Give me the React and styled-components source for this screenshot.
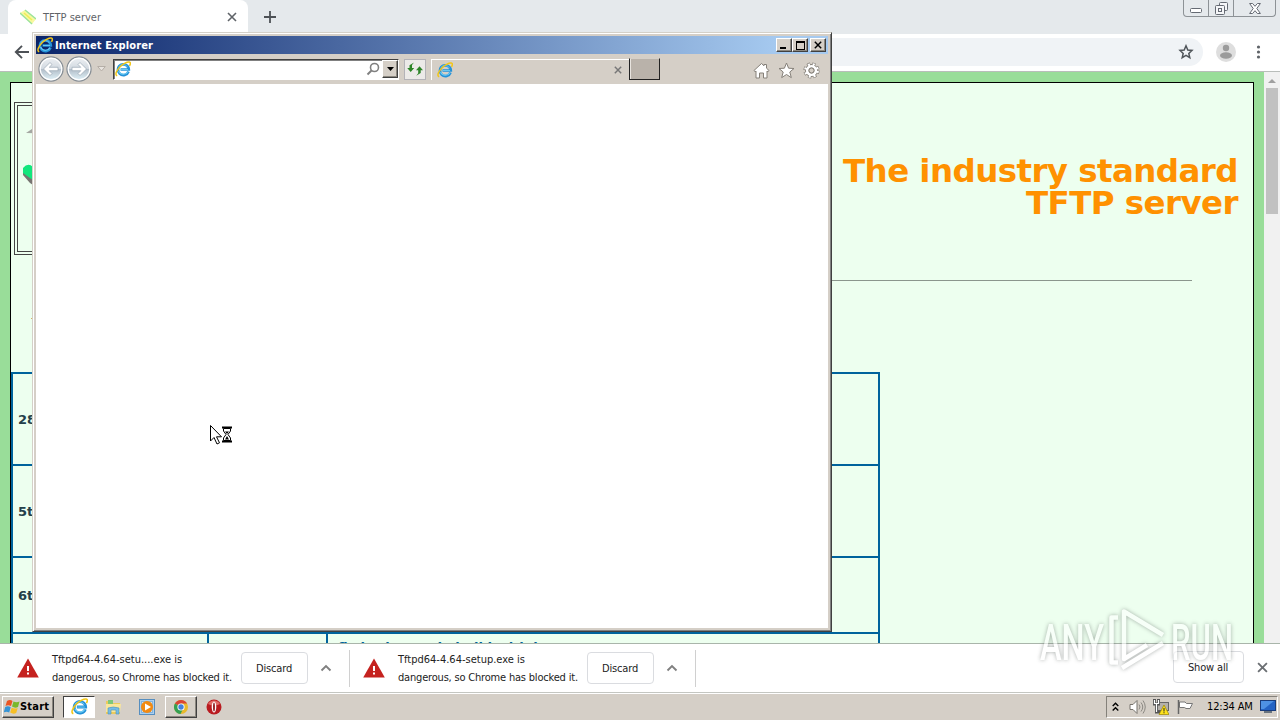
import React from "react";
import styled, {createGlobalStyle} from "styled-components";

const GlobalStyle = createGlobalStyle`
  * {
    box-sizing: border-box;
  }

  body {
    margin: 0;
    overflow: hidden;
    font-family: "DejaVu Sans Condensed", "DejaVu Sans", sans-serif;
    font-size: 11px;
    color: #222;
  }

  svg {
    display: block;
    flex: none;
  }
`;

const Desktop = styled.div`
  position: relative;
  display: flex;
  flex-direction: column;
  width: 1280px;
  height: 720px;
  overflow: hidden;
  background: #fff;
`;

const Label = styled.span`
  font-size: ${p => p.$size || 11}px;
  letter-spacing: ${p => p.$spacing || 0}px;
  font-weight: ${p => (p.$bold ? "bold" : "normal")};
  color: ${p => p.$color || "#222"};
  white-space: nowrap;
`;

/* browser */

const TabStrip = styled.div`
  display: flex;
  align-items: flex-start;
  height: 34px;
  padding-left: 8px;
  background: #e5e9ec;
`;

const Tab = styled.div`
  display: flex;
  align-items: center;
  width: 240px;
  height: 34px;
  padding: 0 11px 0 12px;
  background: #fff;
  border-radius: 8px 8px 0 0;
`;

const TabTitle = styled(Label)`
  flex: 1;
  margin-left: 7px;
`;

const NewTab = styled.div`
  margin: 10px 0 0 15px;
`;

const Caption = styled.div`
  display: flex;
  width: 93px;
  height: 17px;
  margin: 0 4px 0 auto;
  border: 1px solid #8d9296;
  border-top: 0;
  border-radius: 0 0 4px 4px;
`;

const CaptionCell = styled.div`
  display: flex;
  align-items: center;
  justify-content: center;
  width: ${p => p.$width}px;
  padding-top: ${p => p.$drop || 0}px;
  border-right: ${p => (p.$last ? "0" : "1px solid #8d9296")};
`;

const Toolbar = styled.div`
  display: flex;
  align-items: center;
  height: 38px;
  padding: 0 14px 1px 14px;
  border-bottom: 1px solid #b9bdba;
  background: #fff;
`;

const Omnibox = styled.div`
  display: flex;
  flex: 1;
  align-items: center;
  justify-content: flex-end;
  height: 28px;
  margin: 0 13px 0 90px;
  padding-right: 9px;
  background: #f0f3f6;
  border-radius: 14px;
`;

const MenuDots = styled.div`
  margin-left: 14px;
`;

const Viewport = styled.div`
  display: flex;
  height: 571px;
  overflow: hidden;
  background: #99dd99;
`;

const Page = styled.div`
  flex: 1;
  height: 700px;
  margin: 10px 10px 0;
  border: 1px solid #000;
  background: #edffef;
  font-family: Verdana, "DejaVu Sans", sans-serif;
`;

const Masthead = styled.div`
  display: flex;
  justify-content: space-between;
  height: 197px;
  padding: 19px 15px 0 3px;
`;

const Banner = styled.div`
  width: 260px;
  height: 153px;
  padding-top: 18px;
  border: 4px double #444;
`;

const Slogan = styled.h1`
  margin: 53px 0 0;
  font-size: 32.5px;
  line-height: 32px;
  letter-spacing: -0.58px;
  text-align: right;
  color: #ff9100;
`;

const Rule = styled.div`
  width: 1120px;
  height: 1px;
  margin-left: 61px;
  background: #8b968d;
`;

const Intro = styled.div`
  height: 91px;
  padding: 29px 0 0 20px;
  font-size: 13px;
  color: #333;
`;

const News = styled.div`
  width: 869px;
  border: 2px solid #00639c;
  border-bottom: 0;
`;

const NewsRow = styled.div`
  display: flex;
  align-items: center;
  height: ${p => p.$height}px;
  border-bottom: 2px solid #00639c;
`;

const NewsCell = styled.div`
  width: ${p => p.$width}px;
  height: ${p => (p.$line ? "100%" : "auto")};
  padding: ${p => p.$pad || "0 0 0 5px"};
  border-right: ${p => (p.$line ? "2px solid #00639c" : "0")};
  font-size: 13px;
  line-height: 15px;
  font-weight: bold;
  white-space: nowrap;
  color: ${p => p.$color || "#24404a"};
`;

const Scrollbar = styled.div`
  display: flex;
  flex-direction: column;
  align-items: center;
  width: 16px;
  background: #f1f1f1;
`;

const ScrollArrow = styled.div`
  width: 0;
  height: 0;
  margin: 7px 0 5px;
  border: 4px solid transparent;
  border-top: 0;
  border-bottom-color: #a0a0a0;
`;

const ScrollThumb = styled.div`
  width: 12px;
  height: 126px;
  background: #c1c1c1;
`;

const Shelf = styled.div`
  display: flex;
  align-items: center;
  height: 50px;
  padding-right: 12px;
  border-top: 1px solid #a9b5aa;
  border-bottom: 1px solid #c4c6c1;
  background: #fff;
`;

const Download = styled.div`
  display: flex;
  align-items: center;
  width: ${p => p.$width}px;
  height: 37px;
  padding-left: ${p => p.$pad}px;
  border-right: 1px solid #d0d0d0;
`;

const DownloadText = styled.div`
  display: flex;
  flex-direction: column;
  width: 189px;
  margin: 2px 0 0 13px;
  line-height: 18px;
`;

const ShelfButton = styled.div`
  display: flex;
  align-items: center;
  justify-content: center;
  width: ${p => p.$width}px;
  height: 32px;
  padding-right: 1px;
  border: 1px solid #dadce0;
  border-radius: 4px;
`;

const Chevron = styled.div`
  margin-left: 12px;
`;

const ShelfEnd = styled.div`
  display: flex;
  align-items: center;
  gap: 13px;
  height: 32px;
  margin: -2px 0 0 auto;
`;

/* taskbar */

const Taskbar = styled.div`
  display: flex;
  align-items: center;
  height: 27px;
  padding: 0 2px 1px;
  border-top: 1px solid #fff;
  background: #d5cfc7;
`;

const raised = `
  border: 1px solid;
  border-color: #fff #404040 #404040 #fff;
  box-shadow: inset -1px -1px 0 #8b877f;
`;

const StartButton = styled.div`
  ${raised}
  display: flex;
  align-items: center;
  width: 52px;
  height: 22px;
  padding-left: 1px;
`;

const TaskItem = styled.div`
  display: flex;
  align-items: center;
  justify-content: center;
  width: 32px;
  height: 22px;
  margin-left: ${p => p.$gap || 0}px;
  ${p => p.$raised && raised}
  ${p => p.$pressed && `
    background: #fff;
    border: 1px solid;
    border-color: #404040 #fff #fff #404040;
  `}
`;

const Tray = styled.div`
  display: flex;
  align-items: center;
  width: 172px;
  height: 22px;
  margin-left: auto;
  padding: 0 1px 0 5px;
  border: 1px solid;
  border-color: #84817a #fff #fff #84817a;
`;

const TrayGap = styled.div`
  width: ${p => p.$width}px;
`;

const Clock = styled(Label)`
  width: 53px;
`;

/* Internet Explorer window */

const Window = styled.div`
  position: absolute;
  left: 32px;
  top: 32px;
  width: 800px;
  height: 600px;
  padding: 2px;
  border: 1px solid;
  border-color: #d4d0c8 #404040 #404040 #d4d0c8;
  box-shadow: inset 1px 1px 0 #fff, inset -1px -1px 0 #808080;
  background: #d5cfc7;
`;

const WindowBody = styled.div`
  display: flex;
  flex-direction: column;
  height: 100%;
  padding: 1px;
`;

const TitleBar = styled.div`
  display: flex;
  align-items: center;
  height: 18px;
  padding: 0 2px 0 1px;
  background: linear-gradient(to right, #0a246a, #a6caf0 94%);
`;

const TitleText = styled(Label)`
  flex: 1;
  margin-left: 2px;
`;

const TitleButton = styled.div`
  ${raised}
  display: flex;
  align-items: center;
  justify-content: center;
  width: 16px;
  height: 14px;
  margin-left: ${p => p.$gap || 0}px;
  background: #d5cfc7;
`;

const NavBar = styled.div`
  display: flex;
  align-items: center;
  height: 30px;
  padding: 0 8px 0 2px;
`;

const History = styled.div`
  display: flex;
  gap: 2px;
  margin-right: 5px;
`;

const Address = styled.div`
  display: flex;
  align-items: center;
  width: 286px;
  height: 21px;
  margin-left: 7px;
  padding-left: 1px;
  border: 1px solid;
  border-color: #404040 #fff #fff #404040;
  box-shadow: inset 1px 1px 0 #808080;
  background: #fff;
`;

const Spacer = styled.div`
  flex: 1;
`;

const DropButton = styled.div`
  ${raised}
  display: flex;
  align-items: center;
  justify-content: center;
  width: 16px;
  height: 18px;
  margin-left: 2px;
  background: #d5cfc7;
`;

const Refresh = styled.div`
  display: flex;
  align-items: center;
  justify-content: center;
  width: 22px;
  height: 21px;
  margin-left: 5px;
  border: 1px solid #b4b3b8;
  background: #eceae8;
`;

const IeTab = styled.div`
  display: flex;
  align-items: center;
  justify-content: space-between;
  width: 198px;
  height: 21px;
  margin-left: 5px;
  padding: 0 7px 0 5px;
  border-top: 1px solid #fff;
  border-left: 1px solid #fff;
`;

const IeNewTab = styled.div`
  width: 31px;
  height: 22px;
  border: 1px solid #222;
  border-top-color: #d5cfc7;
  box-shadow: inset 1px 0 0 #e8e4df;
  background: #b9b2aa;
`;

const Commands = styled.div`
  display: flex;
  gap: 8px;
  margin: 3px 0 0 auto;
`;

const Document = styled.div`
  flex: 1;
  background: #fff;
`;

const Cursor = styled.div`
  position: absolute;
  left: 209px;
  top: 424px;
`;

const Watermark = styled.div`
  position: absolute;
  left: 1034px;
  top: 604px;
  filter: drop-shadow(0 0 2px rgba(80, 90, 85, 0.8));
  opacity: 0.6;
`;

const IeLogo = ({size}) => (
    <svg width={size} height={size} viewBox="0 0 16 16" fill="none">
        <path d="M13.5 10.500A5.400 5.400 0 1 1 13.800 8.500H5.500" stroke="#2592d8" strokeWidth="2.700"/>
        <path d="M12.900 10.700A5.200 5.200 0 0 1 3.600 10" stroke="#6ccdf5" strokeWidth="1.100"/>
        <path d="M3.600 5.800A5.500 5.500 0 0 1 12.600 6M6 8.500h7" stroke="#6ccdf5" strokeWidth="0.900"/>
        <path d="M2.200 14.900C-.8 13.900 2 8.300 6.100 4.700S14.800-.1 15.300 1.800c.2.900-.2 2-.8 3" stroke="#f2c617" strokeWidth="1.500"/>
    </svg>
);

const Cross = ({size, color, width}) => (
    <svg width={size} height={size} viewBox="0 0 10 10" stroke={color} strokeWidth={width}>
        <path d="M1 1l8 8M9 1L1 9"/>
    </svg>
);

const RoundArrow = ({flip}) => (
    <svg width="26" height="26" viewBox="0 0 26 26">
        <defs>
            <linearGradient id="orb" x1="0" y1="0" x2="0" y2="1">
                <stop offset="0" stopColor="#eef1f4"/>
                <stop offset="0.48" stopColor="#d3dae1"/>
                <stop offset="0.52" stopColor="#b3bfca"/>
                <stop offset="1" stopColor="#e4f6fc"/>
            </linearGradient>
        </defs>
        <circle cx="13" cy="13" r="12" fill="url(#orb)" stroke="#878e95" strokeWidth="1.300"/>
        <circle cx="13" cy="13" r="10.800" fill="none" stroke="#fff" strokeWidth="1.200"/>
        <path
            d="M12 6.500L5.500 13l6.500 6.500 2-2-2.800-2.800H20v-3.400h-8.800L14 8.500z"
            transform={flip ? "translate(26 0) scale(-1 1)" : undefined}
            fill="#fff"
            stroke="#9aa8b5"
            strokeWidth="0.700"
        />
    </svg>
);

const Warning = () => (
    <svg width="22" height="20" viewBox="0 0 22 20">
        <path d="M11 0.500L21.800 19.500H0.200z" fill="#c5221f"/>
        <path d="M10 8h2v5h-2zM10 14.500h2v2h-2z" fill="#fff"/>
    </svg>
);

const BlockedFile = ({name, width, pad}) => (
    <Download $width={width} $pad={pad}>
        <Warning/>
        <DownloadText>
            <Label>{name} is</Label>
            <Label $spacing={-0.19}>dangerous, so Chrome has blocked it.</Label>
        </DownloadText>
        <ShelfButton $width={67}><Label $spacing={-0.15}>Discard</Label></ShelfButton>
        <Chevron>
            <svg width="12" height="8" viewBox="0 0 12 8" fill="none" stroke="#808080" strokeWidth="1.900">
                <path d="M1.500 6.500L6 2l4.500 4.500"/>
            </svg>
        </Chevron>
    </Download>
);

const TrayIcons = () => (
    <>
        <svg width="7" height="10" viewBox="0 0 7 10" fill="none" stroke="#000" strokeWidth="1.400">
            <path d="M.7 4L3.500 1.200 6.300 4M.7 8.500L3.500 5.700l2.800 2.800"/>
        </svg>
        <TrayGap $width={10}/>
        <svg width="17" height="16" viewBox="0 0 17 16" fill="none" stroke="#77736d">
            <path d="M1 5.500h3L8 1.500v13l-4-4H1z" fill="#fff"/>
            <path d="M10 5.500q2 2.500 0 5M12 3.500q3.500 4.500 0 9M14 1.500q4.500 6.500 0 13" stroke="#8c8983"/>
        </svg>
        <TrayGap $width={7}/>
        <svg width="16" height="16" viewBox="0 0 16 16">
            <rect x="4.500" y="3.500" width="11" height="8" fill="#b4b0aa" stroke="#666"/>
            <path d="M1.500 0v5h4V0M3.500 5.500V13h4" fill="none" stroke="#555" strokeWidth="3"/>
            <path d="M1.500 1v3.500h4V1M3.500 5v8" fill="none" stroke="#fff" strokeWidth="1.200"/>
            <path d="M11 6l5 9.500H6z" fill="#ffe21a" stroke="#9a8500" strokeWidth="0.700"/>
            <path d="M10.500 9h1v3.500h-1zM10.500 13.300h1v1h-1z" fill="#222"/>
        </svg>
        <TrayGap $width={8}/>
        <svg width="17" height="16" viewBox="0 0 17 16">
            <path d="M2.500 3h5.500l1.500 1.500h6L13 9.500H9L7.500 8.500h-5z" fill="#fff" stroke="#777"/>
            <path d="M1.500 1v14" stroke="#666" strokeWidth="1.500"/>
        </svg>
    </>
);

const Explorer = () => (
    <Window>
        <WindowBody>
            <TitleBar>
                <IeLogo size={16}/>
                <TitleText $bold $color="#fff" $spacing={0.13}>Internet Explorer</TitleText>
                <TitleButton>
                    <svg width="8" height="8" viewBox="0 0 8 8"><path d="M0 6h6v2H0z"/></svg>
                </TitleButton>
                <TitleButton>
                    <svg width="9" height="9" viewBox="0 0 9 9"><path d="M0 0h9v9H0zM1 2v6h7V2z" fillRule="evenodd"/></svg>
                </TitleButton>
                <TitleButton $gap={2}><Cross size={8} color="#000" width={1.8}/></TitleButton>
            </TitleBar>
            <NavBar>
                <History>
                    <RoundArrow/>
                    <RoundArrow flip/>
                </History>
                <svg width="9" height="6" viewBox="0 0 9 6"><path d="M.7.500h7.600L4.500 5z" fill="#e8e4df" stroke="#b5aea7"/></svg>
                <Address>
                    <IeLogo size={16}/>
                    <Spacer/>
                    <svg width="14" height="14" viewBox="0 0 14 14" fill="none" stroke="#808080">
                        <circle cx="8.500" cy="5.500" r="4" strokeWidth="1.600"/>
                        <path d="M5.500 8.500L1.500 12.500" strokeWidth="2"/>
                    </svg>
                    <DropButton>
                        <svg width="7" height="4" viewBox="0 0 7 4"><path d="M0 0h7L3.500 4z"/></svg>
                    </DropButton>
                </Address>
                <Refresh>
                    <svg width="16" height="14" viewBox="0 0 16 14" fill="#2c8427">
                        <path d="M7 .500L5 3v3h2.200L3.700 10 .200 6h2.300V3.200z"/>
                        <path d="M9.200 13.800l2-2.500v-3H9L12.500 4.300 16 8.300h-2.300v2.800z"/>
                    </svg>
                </Refresh>
                <IeTab>
                    <IeLogo size={16}/>
                    <Cross size={8} color="#777" width={1.8}/>
                </IeTab>
                <IeNewTab/>
                <Commands>
                    <svg width="17" height="17" viewBox="0 0 17 17" fill="#fff" stroke="#858079">
                        <path d="M1 8.500L8.500 1.500l2.500 2.300V2.500h2.500v3.700L16 8.500l-1 1.300-1-.8v7h-3.500v-5h-4v5H3V9l-1 .8z"/>
                    </svg>
                    <svg width="17" height="17" viewBox="0 0 17 17" fill="#fff" stroke="#858079">
                        <path d="M8.500 1l2.100 5.200 5.400.3-4.200 3.500 1.500 5.600-4.800-3.100-4.800 3.100 1.500-5.600L1 6.500l5.400-.3z"/>
                    </svg>
                    <svg width="17" height="17" viewBox="0 0 17 17" fill="none">
                        <circle cx="8.500" cy="8.500" r="6.300" stroke="#858079" strokeWidth="3.600" strokeDasharray="2.950 2"/>
                        <circle cx="8.500" cy="8.500" r="4.500" stroke="#858079" strokeWidth="4"/>
                        <circle cx="8.500" cy="8.500" r="6" stroke="#fff" strokeWidth="2.800" strokeDasharray="1.900 2.812" strokeDashoffset="-.5"/>
                        <circle cx="8.500" cy="8.500" r="4.300" stroke="#fff" strokeWidth="2.600"/>
                        <circle cx="8.500" cy="8.500" r="2.500" fill="#d5cfc7" stroke="#858079"/>
                    </svg>
                </Commands>
            </NavBar>
            <Document/>
        </WindowBody>
    </Window>
);

const App = () => {
    return (
        <Desktop>
            <GlobalStyle/>
            <TabStrip>
                <Tab>
                    <svg width="16" height="16" viewBox="0 0 16 16">
                        <path d="M0 4L5 1l11 9-4 5z" fill="#f8f8a0"/>
                        <path d="M0 4l12 11M5 1l11 9" stroke="#9be39a" strokeWidth="1.400"/>
                        <path d="M4 4l8 7" stroke="#eeee55" strokeWidth="1.500"/>
                    </svg>
                    <TabTitle $color="#5f6368">TFTP server</TabTitle>
                    <Cross size={10} color="#5f6368" width={1.6}/>
                </Tab>
                <NewTab>
                    <svg width="14" height="14" viewBox="0 0 14 14" stroke="#4d5156" strokeWidth="1.800"><path d="M7 1v12M1 7h12"/></svg>
                </NewTab>
                <Caption>
                    <CaptionCell $width={25} $drop={4}>
                        <svg width="12" height="5" viewBox="0 0 12 5"><rect x=".5" y=".5" width="11" height="4" rx="1" fill="#fff" stroke="#656a73"/></svg>
                    </CaptionCell>
                    <CaptionCell $width={25}>
                        <svg width="13" height="13" viewBox="0 0 13 13" fill="#f5f6f8" stroke="#656a73">
                            <rect x="4.500" y=".5" width="8" height="8" rx="1"/>
                            <rect x=".5" y="3.500" width="9" height="9" rx="1"/>
                            <rect x="3.500" y="6.500" width="3" height="3"/>
                        </svg>
                    </CaptionCell>
                    <CaptionCell $width={41} $last>
                        <svg width="12" height="11" viewBox="0 0 12 11">
                            <path d="M.6.500h3L6 3.300 8.400.500h3L7.800 5.500l3.600 5h-3L6 7.700 3.600 10.500h-3l3.600-5z" fill="#fff" stroke="#656a73"/>
                        </svg>
                    </CaptionCell>
                </Caption>
            </TabStrip>
            <Toolbar>
                <svg width="16" height="14" viewBox="0 0 16 14" fill="none" stroke="#4d5156" strokeWidth="1.900">
                    <path d="M15 7H2M8 .8L1.800 7 8 13.200"/>
                </svg>
                <Omnibox>
                    <svg width="16" height="16" viewBox="0 0 16 16" fill="none" stroke="#50555a" strokeWidth="1.500">
                        <path d="M8 1.800l1.800 4.200 4.200.4-3.200 3 1 4.300-3.800-2.300-3.800 2.300 1-4.300-3.200-3 4.200-.4z"/>
                    </svg>
                </Omnibox>
                <svg width="20" height="20" viewBox="0 0 20 20">
                    <circle cx="10" cy="10" r="10" fill="#dedede"/>
                    <circle cx="10" cy="6" r="3.200" fill="#9b9b9b"/>
                    <ellipse cx="10" cy="13.500" rx="6" ry="3.300" fill="#9b9b9b"/>
                </svg>
                <MenuDots>
                    <svg width="16" height="16" viewBox="0 0 16 16" fill="#5f6368">
                        <circle cx="8.500" cy="3" r="1.600"/>
                        <circle cx="8.500" cy="8" r="1.600"/>
                        <circle cx="8.500" cy="13" r="1.600"/>
                    </svg>
                </MenuDots>
            </Toolbar>
            <Viewport>
                <Page>
                    <Masthead>
                        <Banner>
                            <svg width="60" height="80" viewBox="0 0 60 80">
                                <path d="M8 9l6-4 30 2v3z" fill="#a5a7a2"/>
                                <path d="M5 46v5l7 8 30 20v-8z" fill="#777471"/>
                                <path d="M5 44q5-6 10-1l30 26-5 5L5 49z" fill="#12e67c"/>
                            </svg>
                        </Banner>
                        <Slogan>The industry standard<br/>TFTP server</Slogan>
                    </Masthead>
                    <Rule/>
                    <Intro>-</Intro>
                    <News>
                        <NewsRow $height={92}><NewsCell>28th March</NewsCell></NewsRow>
                        <NewsRow $height={92}><NewsCell>5th March</NewsCell></NewsRow>
                        <NewsRow $height={76}><NewsCell>6th January</NewsCell></NewsRow>
                        <NewsRow $height={92}>
                            <NewsCell $line $width={196}/>
                            <NewsCell $line $width={119}/>
                            <NewsCell $color="#00639c" $pad="6px 0 69px 10px">fix broken code build with lto</NewsCell>
                        </NewsRow>
                    </News>
                </Page>
                <Scrollbar>
                    <ScrollArrow/>
                    <ScrollThumb/>
                </Scrollbar>
            </Viewport>
            <Shelf>
                <BlockedFile name="Tftpd64-4.64-setu....exe" width={350} pad={17}/>
                <BlockedFile name="Tftpd64-4.64-setup.exe" width={346} pad={13}/>
                <ShelfEnd>
                    <ShelfButton $width={71}><Label $spacing={-0.15}>Show all</Label></ShelfButton>
                    <Cross size={11} color="#6b6f73" width={1.7}/>
                </ShelfEnd>
            </Shelf>
            <Taskbar>
                <StartButton>
                    <svg width="16" height="16" viewBox="0 0 16 16">
                        <path d="M3 2q3-2 5.500 0L7 7Q4 5.500 1.500 7z" fill="#ea5523"/>
                        <path d="M9.500 2.500q3 1.500 6 0L14 8q-3 1.500-6-.5z" fill="#79b82b"/>
                        <path d="M1.200 8Q4 6.500 6.700 8.200L5.200 13.500Q2.500 12-.2 13.300z" fill="#3694d5"/>
                        <path d="M7.700 8.700q3 1.500 6 .3L12.200 14q-3 1.500-6-.5z" fill="#f7bf25"/>
                    </svg>
                    <Label $bold $color="#000" $spacing={0.2}>Start</Label>
                </StartButton>
                <TaskItem $pressed $gap={9}><IeLogo size={17}/></TaskItem>
                <TaskItem $gap={2}>
                    <svg width="17" height="16" viewBox="0 0 17 16">
                        <path d="M1 2h6l1 2h7v11H1z" fill="#edca5b"/>
                        <path d="M3 1h5v4H3z" fill="#7ec879"/>
                        <path d="M1 5h15l-1 8H1z" fill="#f9e79b"/>
                        <path d="M3 15V9q5-2 11 0v6h-3v-4H6v4z" fill="#75bce5" stroke="#4c91bb" strokeWidth="0.600"/>
                    </svg>
                </TaskItem>
                <TaskItem $gap={2}>
                    <svg width="16" height="16" viewBox="0 0 16 16">
                        <rect x=".5" y=".5" width="15" height="15" fill="#acd0ef" stroke="#568ebf"/>
                        <rect x="2.500" y="2.500" width="11" height="11" fill="#d5e7f4" stroke="#83b3dc"/>
                        <circle cx="8" cy="8" r="6" fill="#f28a12"/>
                        <path d="M6 4.500v7L12 8z" fill="#fff"/>
                    </svg>
                </TaskItem>
                <TaskItem $raised $gap={2}>
                    <svg width="16" height="16" viewBox="0 0 16 16">
                        <circle cx="8" cy="8" r="7" fill="#e8b92c"/>
                        <path d="M8 8L1.900 4.500A7 7 0 0 1 14.100 4.500H8z" fill="#d94435"/>
                        <path d="M8 8L1.900 4.500A7 7 0 0 0 7.500 15L10.500 9z" fill="#35a052"/>
                        <circle cx="8" cy="8" r="3.600" fill="#fff"/>
                        <circle cx="8" cy="8" r="2.700" fill="#4381dc"/>
                    </svg>
                </TaskItem>
                <TaskItem $gap={1}>
                    <svg width="16" height="16" viewBox="0 0 16 16">
                        <circle cx="8" cy="8" r="7.500" fill="#b91b20"/>
                        <path d="M2 5a7 7 0 0 1 12 0q-6 3-12 0" fill="#e16b67"/>
                        <ellipse cx="8" cy="8" rx="2.300" ry="5.500" fill="#fff"/>
                        <ellipse cx="8" cy="8" rx="0.900" ry="4.500" fill="#8c1015"/>
                    </svg>
                </TaskItem>
                <Tray>
                    <TrayIcons/>
                    <TrayGap $width={13}/>
                    <Clock $color="#000" $spacing={-0.15}>12:34 AM</Clock>
                    <svg width="16" height="13" viewBox="0 0 16 13">
                        <rect x=".5" y=".5" width="15" height="10" fill="#2463c4" stroke="#193c7b"/>
                        <path d="M1 1h13L4 9H1z" fill="#4e91e3"/>
                        <path d="M4 12h8" stroke="#456" strokeWidth="1.500"/>
                    </svg>
                </Tray>
            </Taskbar>
            <Explorer/>
            <Cursor>
                <svg width="24" height="22" viewBox="0 0 24 22" fill="#fff" stroke="#000">
                    <path d="M1.500 1.500v15.500l3.500-3.500 3 6.500 2.500-1.200-3-6h5z"/>
                    <path d="M13 3.500h10M13 17.500h10" strokeWidth="2"/>
                    <path d="M14.500 4.500h7v2.500l-2.500 3.500 2.500 3.500v2.500h-7V14l2.500-3.500L14.500 7z"/>
                    <path d="M16 7.500h4l-2 2.500zM18 12l2 3.500h-4z" fill="#000" stroke="none"/>
                </svg>
            </Cursor>
            <Watermark>
                <svg width="204" height="72" viewBox="0 0 204 72" fill="none" stroke="#fff">
                    <g fill="#fff" stroke="none" fontFamily="Roboto, sans-serif" fontSize="50" fontWeight="500">
                        <text x="6" y="56" textLength="64" lengthAdjust="spacingAndGlyphs">ANY</text>
                        <text x="137" y="56" textLength="62" lengthAdjust="spacingAndGlyphs">RUN</text>
                    </g>
                    <path d="M84 13.500h-6.500v45h6.500M129 31L90 7.500V55l23-14M88 64l41-25" strokeWidth="4.500" strokeLinejoin="round"/>
                </svg>
            </Watermark>
        </Desktop>
    );
};

export default App;
